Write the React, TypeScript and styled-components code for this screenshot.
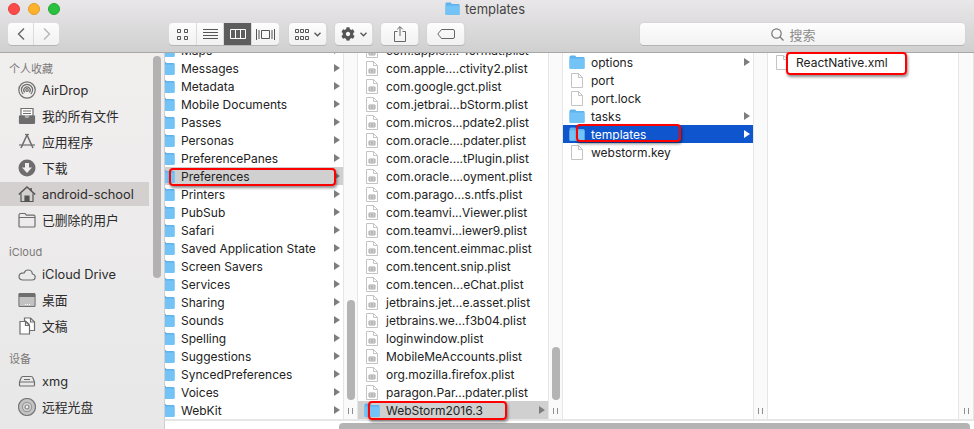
import styled, { createGlobalStyle } from 'styled-components'
import { FaCog } from 'react-icons/fa'

const GlobalStyle = createGlobalStyle`
  html, body {
    margin: 0;
    padding: 0;
    background: #fff;
  }
  #root {
    width: 974px;
    height: 429px;
  }
`

const Window = styled.div`
  position: relative;
  display: flex;
  flex-direction: column;
  width: 974px;
  height: 429px;
  overflow: hidden;
  font-family: Inter, "Noto Sans CJK SC", sans-serif;
  font-size: 12px;
  color: #222;
`

const Toolbar = styled.div`
  flex: 0 0 53px;
  box-sizing: border-box;
  border-bottom: 1px solid #a8a8a8;
  background: linear-gradient(#e9e7e9, #d0d0d0);
`

const TitleRow = styled.div`
  display: grid;
  grid-template-columns: 1fr auto 1fr;
  align-items: center;
  height: 18px;
  padding: 0 0 5px 8px;
`

const Lights = styled.div`
  display: flex;
  gap: 8px;
`

const Light = styled.span<{ $color: string; $edge: string }>`
  box-sizing: border-box;
  width: 12px;
  height: 12px;
  border-radius: 50%;
  background: ${p => p.$color};
  border: 1px solid ${p => p.$edge};
`

const Title = styled.div`
  display: flex;
  align-items: center;
  gap: 5px;
  margin-right: 12px;
  font-size: 13px;
  color: #444;
`

const Controls = styled.div`
  display: flex;
  align-items: flex-start;
  height: 22px;
  padding: 0 9px 0 8px;
`

const ToolGroup = styled.div<{ $gap?: number }>`
  display: flex;
  height: 22px;
  margin-left: ${p => p.$gap ?? 0}px;
`

const ToolButton = styled.div<{ $width: number; $active?: boolean; $gap?: number }>`
  display: flex;
  align-items: center;
  justify-content: center;
  gap: 5px;
  box-sizing: border-box;
  width: ${p => p.$width}px;
  height: 22px;
  margin-left: ${p => p.$gap ?? 0}px;
  background: ${p => (p.$active ? '#5d5d5d' : 'linear-gradient(#fdfdfd, #f1f1f1)')};
  color: ${p => (p.$active ? '#fff' : '#555')};
  border-right: 1px solid #dadada;
  border-radius: 4px;
  box-shadow: 0 1px 0 #b4b4b4, 0 0 0 0.5px #cfcfcf;
`

const SegmentButton = styled(ToolButton)`
  border-radius: 0;
  box-shadow: 0 1px 0 #b4b4b4;
  &:first-child { border-radius: 4px 0 0 4px; }
  &:last-child { border-radius: 0 4px 4px 0; border-right: 0; }
`

const SearchField = styled.div`
  display: flex;
  align-items: center;
  justify-content: center;
  gap: 5px;
  box-sizing: border-box;
  height: 22px;
  width: 325px;
  margin-left: auto;
  padding-right: 18px;
  background: linear-gradient(#fdfdfd, #f2f2f2);
  border-radius: 4px;
  box-shadow: 0 1px 0 #b4b4b4, 0 0 0 0.5px #cfcfcf;
  font-size: 13px;
  color: #8c8c8c;
`

const Body = styled.div`
  flex: 1;
  display: flex;
  min-height: 0;
`

const Sidebar = styled.nav`
  position: relative;
  flex: 0 0 165px;
  box-sizing: border-box;
  padding-top: 4px;
  border-right: 1px solid #cfcfcf;
  background: linear-gradient(#f1eeee, #e8e8e8);
  overflow: hidden;
`

const SideThumb = styled.div`
  position: absolute;
  left: 153px;
  top: 3px;
  width: 8px;
  height: 222px;
  border-radius: 4px;
  background: #b3b1b1;
`

const SideHeader = styled.div<{ $gap?: number; $lift?: number }>`
  display: flex;
  align-items: center;
  box-sizing: border-box;
  height: 19px;
  margin-top: ${p => p.$gap ?? 0}px;
  padding: 2px 0 ${p => p.$lift ?? 0}px 9px;
  font-size: 11px;
  color: #7b7878;
`

const SideItem = styled.div<{ $active?: boolean }>`
  display: flex;
  align-items: center;
  gap: 6px;
  width: 149px;
  height: 24px;
  margin: 2px 0;
  padding-left: 18px;
  box-sizing: border-box;
  font-size: 12.8px;
  color: #2b2b2b;
  background: ${p => (p.$active ? '#d5d0d0' : 'transparent')};
`

// the CJK face sits a pixel low next to the Latin one
const SideLabel = styled.span<{ $cjk?: boolean }>`
  padding-bottom: ${p => (p.$cjk ? 2 : 0)}px;
`

const SideIcon = styled.svg`
  flex: 0 0 18px;
  width: 18px;
  height: 18px;
  fill: none;
  stroke: #6e6e6e;
  stroke-width: 1.2;
`

const Browser = styled.div`
  flex: 1;
  display: flex;
  flex-direction: column;
  min-width: 0;
`

const Columns = styled.div`
  flex: 0 0 366px;
  display: flex;
  overflow: hidden;
`

const Column = styled.div<{ $width: number }>`
  flex: 0 0 ${p => p.$width}px;
  overflow: hidden;
`

// scrolled columns start part way through a row, and the first one is also scrolled sideways
const List = styled.div<{ $top?: number; $left?: number }>`
  margin-top: ${p => p.$top ?? 0}px;
  margin-left: ${p => p.$left ?? 0}px;
`

const Row = styled.div<{ $state?: 'grey' | 'blue' }>`
  display: flex;
  align-items: center;
  gap: 6px;
  height: 18px;
  padding: 0 3px 0 6px;
  white-space: nowrap;
  background: ${p => (p.$state === 'blue' ? '#0f55ce' : p.$state === 'grey' ? '#d0d0d0' : 'transparent')};
  color: ${p => (p.$state === 'blue' ? '#fff' : '#222')};
`

const RowLabel = styled.span`
  flex: 1;
`

const Arrow = styled.span<{ $light?: boolean }>`
  width: 0;
  height: 0;
  border-style: solid;
  border-width: 4.5px 0 4.5px 6px;
  border-color: transparent transparent transparent ${p => (p.$light ? '#fff' : '#7d7d7d')};
`

const IconSlot = styled.span`
  flex: 0 0 16px;
  display: flex;
  justify-content: center;
`

const Strip = styled.div<{ $width?: number }>`
  flex: 0 0 ${p => p.$width ?? 15}px;
  box-sizing: border-box;
  display: flex;
  flex-direction: column;
  align-items: center;
  justify-content: flex-end;
  padding-bottom: 5px;
  background: #fafafa;
  border-left: 1px solid #e6e6e6;
  border-right: 1px solid #e6e6e6;
`

const StripThumb = styled.div<{ $height: number }>`
  width: 8px;
  height: ${p => p.$height}px;
  margin-bottom: 8px;
  border-radius: 4px;
  background: #b4b4b4;
`

const Grip = styled.div`
  width: 5px;
  height: 6px;
  border-left: 1px solid #8f8f8f;
  border-right: 1px solid #8f8f8f;
  box-sizing: border-box;
`

const HScroll = styled.div`
  flex: 1;
  box-sizing: border-box;
  border-top: 2px solid #e6e6e6;
  padding: 2px 4px 0 174px;
  overflow: hidden;
`

const HThumb = styled.div`
  height: 10px;
  border-radius: 4px;
  background: #b4b4b4;
`

const Annotation = styled.div<{ $x: number; $y: number; $w: number; $h: number }>`
  position: absolute;
  left: ${p => p.$x}px;
  top: ${p => p.$y}px;
  width: ${p => p.$w}px;
  height: ${p => p.$h}px;
  box-sizing: border-box;
  border: 2px solid #f00;
  border-radius: 4px;
  box-shadow: 1px 2px 3px rgba(0, 0, 0, 0.45);
`

const Folder = ({ width = 16 }: { width?: number }) => (
  <svg width={width} height={(width * 14) / 16} viewBox="0 0 16 14">
    <path d="M0.5 2 Q0.5 0.5 2 0.5 H6 L7.5 2 H14.5 Q15.5 2 15.5 3 V13 Q15.5 13.7 14.7 13.7 H1.3 Q0.5 13.7 0.5 13 Z" fill="#5fb2ec" />
    <path d="M0.5 3.6 H15.5 V13 Q15.5 13.7 14.7 13.7 H1.3 Q0.5 13.7 0.5 13 Z" fill="#73c3f6" />
  </svg>
)

const Doc = ({ table }: { table?: boolean }) => (
  <svg width="12" height="15" viewBox="0 0 12 15" fill="#fff" stroke="#c4c4c4" strokeWidth="1">
    <path d="M0.5 0.5 H7.5 L11.5 4.5 V14.5 H0.5 Z" />
    <path d="M7.5 0.5 V4.5 H11.5" fill="none" />
    {table && <path d="M3 8 H9 V12 H3 Z M3 10 H9 M6 8 V12" fill="#eee" stroke="#a8a8a8" />}
  </svg>
)

const sideIcons: Record<string, React.ReactNode> = {
  airdrop: (
    <>
      <circle cx="9" cy="9" r="8.2" />
      <path d="M5.2 13 A5.6 5.6 0 1 1 12.8 13" />
      <path d="M6.7 11.4 A3.2 3.2 0 1 1 11.3 11.4" />
      <circle cx="9" cy="9" r="1.3" />
    </>
  ),
  files: (
    <>
      <path d="M3 1.5 H15 V9 H3 Z" fill="#fff" />
      <path d="M5 4 H13 M5 6.5 H13" />
      <path d="M1.5 9 H6 L7 11 H11 L12 9 H16.5 V15.5 Q16.5 16.5 15.5 16.5 H2.5 Q1.5 16.5 1.5 15.5 Z" fill="#6e6e6e" />
    </>
  ),
  apps: (
    <>
      <path d="M9 2 L15 15 M9 2 L3 15" strokeWidth="1.6" />
      <path d="M1 12 H17" />
      <path d="M7 1.5 L11 1.5" />
    </>
  ),
  download: (
    <>
      <circle cx="9" cy="9" r="8.5" fill="#6e6e6e" stroke="none" />
      <path d="M7 4 H11 V8.5 H14 L9 14 L4 8.5 H7 Z" fill="#f1eeee" stroke="none" />
    </>
  ),
  home: (
    <>
      <path d="M0.8 9.5 L9 2 L17.2 9.5" strokeWidth="1.6" stroke="#555" />
      <path d="M13 3 V6" strokeWidth="1.6" stroke="#555" />
      <path d="M3 8.5 V16.5 H15 V8.5" stroke="#555" />
      <path d="M7 16.5 V11 H11 V16.5" fill="#555" stroke="#555" />
    </>
  ),
  folder: <path d="M1 4 Q1 2.5 2.5 2.5 H7 L8.5 4.2 H15.5 Q17 4.2 17 5.5 V15 Q17 16 16 16 H2 Q1 16 1 15 Z M1 6.5 H17" />,
  cloud: <path d="M5 15 H14 Q17.2 15 17.2 12 Q17.2 9.4 14.4 9 Q14 5 10.2 5 Q7.2 5 6.2 7.8 Q1 7.8 1 11.6 Q1 15 5 15 Z" />,
  desktop: (
    <>
      <rect x="1" y="2.5" width="16" height="13" rx="1" />
      <path d="M1.5 5.5 V3 H16.5 V5.5 Z" fill="#6e6e6e" />
      <path d="M2 6 H16 V15 H2 Z" fill="#c2c2c2" stroke="none" />
      <path d="M7 13.5 H8 M9 13.5 H10 M11 13.5 H12" stroke="#fff" />
    </>
  ),
  docs: (
    <>
      <path d="M6.5 1 H12.5 L16.5 5 V13.5 H11 V7 L7.5 4 H6.5 Z" fill="#fff" />
      <path d="M2 4.5 H7.5 L11.5 8.5 V17 H2 Z" fill="#fff" />
      <path d="M7.5 4.5 V8.5 H11.5 M12.5 1 V5 H16.5" />
    </>
  ),
  disk: (
    <>
      <path d="M3 6 Q3.5 4.5 5 4.5 H13 Q14.5 4.5 15 6 L16.5 10 V13 Q16.5 14 15.5 14 H2.5 Q1.5 14 1.5 13 V10 Z" />
      <path d="M1.8 10 H16.2 M6 7.5 H12" />
    </>
  ),
  cd: (
    <>
      <circle cx="9" cy="9" r="8.5" fill="#c4c4c4" stroke="#777" />
      <circle cx="9" cy="9" r="4.6" fill="#d5d5d5" stroke="#999" />
      <circle cx="9" cy="9" r="2" fill="#eee" stroke="#888" />
    </>
  ),
}

const SideEntry = ({ icon, label, active, cjk }: { icon: string; label: string; active?: boolean; cjk?: boolean }) => (
  <SideItem $active={active}>
    <SideIcon viewBox="0 0 18 18">{sideIcons[icon]}</SideIcon>
    <SideLabel $cjk={cjk}>{label}</SideLabel>
  </SideItem>
)

const libraryFolders = [
  'Maps', 'Messages', 'Metadata', 'Mobile Documents', 'Passes', 'Personas', 'PreferencePanes',
  'Preferences', 'Printers', 'PubSub', 'Safari', 'Saved Application State', 'Screen Savers',
  'Services', 'Sharing', 'Sounds', 'Spelling', 'Suggestions', 'SyncedPreferences', 'Voices', 'WebKit',
]

const plists = [
  'com.apple....-format.plist', 'com.apple....ctivity2.plist', 'com.google.gct.plist',
  'com.jetbrai...bStorm.plist', 'com.micros...pdate2.plist', 'com.oracle....pdater.plist',
  'com.oracle....tPlugin.plist', 'com.oracle....oyment.plist', 'com.parago...s.ntfs.plist',
  'com.teamvi...Viewer.plist', 'com.teamvi...iewer9.plist', 'com.tencent.eimmac.plist',
  'com.tencent.snip.plist', 'com.tencen...eChat.plist', 'jetbrains.jet...e.asset.plist',
  'jetbrains.we...f3b04.plist', 'loginwindow.plist', 'MobileMeAccounts.plist',
  'org.mozilla.firefox.plist', 'paragon.Par...pdater.plist',
]

const marks = [
  { x: 169, y: 168, w: 167, h: 18 },
  { x: 368, y: 401, w: 139, h: 19 },
  { x: 576, y: 124, w: 105, h: 18 },
  { x: 786, y: 52, w: 121, h: 23 },
]

export default function App() {
  return (
    <Window>
      <GlobalStyle />
      <Toolbar>
        <TitleRow>
          <Lights>
            <Light $color="#fc4a4a" $edge="#e2403f" />
            <Light $color="#fdb12c" $edge="#e09e23" />
            <Light $color="#2ac13f" $edge="#21a732" />
          </Lights>
          <Title>
            <Folder width={15} />
            templates
          </Title>
        </TitleRow>
        <Controls>
          <ToolGroup>
            <SegmentButton $width={26}>
              <svg width="10" height="14" viewBox="0 0 10 14" fill="none" stroke="#666" strokeWidth="1.4"><path d="M8 1.5 L2.5 7 L8 12.5" /></svg>
            </SegmentButton>
            <SegmentButton $width={25}>
              <svg width="10" height="14" viewBox="0 0 10 14" fill="none" stroke="#b5b5b5" strokeWidth="1.4"><path d="M2 1.5 L7.5 7 L2 12.5" /></svg>
            </SegmentButton>
          </ToolGroup>
          <ToolGroup $gap={110}>
            <SegmentButton $width={28}>
              <svg width="11" height="11" viewBox="0 0 11 11" fill="none" stroke="#555"><path d="M0.5 0.5 H3.5 V3.5 H0.5 Z M7.5 0.5 H10.5 V3.5 H7.5 Z M0.5 7.5 H3.5 V10.5 H0.5 Z M7.5 7.5 H10.5 V10.5 H7.5 Z" /></svg>
            </SegmentButton>
            <SegmentButton $width={27}>
              <svg width="15" height="10" viewBox="0 0 15 10" stroke="#555"><path d="M0 0.5 H15 M0 3.5 H15 M0 6.5 H15 M0 9.5 H15" /></svg>
            </SegmentButton>
            <SegmentButton $width={28} $active>
              <svg width="16" height="10" viewBox="0 0 16 10" fill="none" stroke="#fff"><path d="M0.5 0.5 H15.5 V9.5 H0.5 Z M5.5 0.5 V9.5 M10.5 0.5 V9.5" /></svg>
            </SegmentButton>
            <SegmentButton $width={27}>
              <svg width="19" height="11" viewBox="0 0 19 11" fill="none" stroke="#555"><path d="M5.5 1.5 H13.5 V9.5 H5.5 Z M0.5 0 V11 M3 1 V10 M16 1 V10 M18.5 0 V11" /></svg>
            </SegmentButton>
          </ToolGroup>
          <ToolButton $width={38} $gap={10}>
            <svg width="14" height="11" viewBox="0 0 14 11" fill="none" stroke="#555"><path d="M0.5 0.5 H3.5 V3.5 H0.5 Z M5.5 0.5 H8.5 V3.5 H5.5 Z M10.5 0.5 H13.5 V3.5 H10.5 Z M0.5 7.5 H3.5 V10.5 H0.5 Z M5.5 7.5 H8.5 V10.5 H5.5 Z M10.5 7.5 H13.5 V10.5 H10.5 Z" /></svg>
            <svg width="7" height="5" viewBox="0 0 7 5" fill="none" stroke="#555" strokeWidth="1.3"><path d="M0.5 0.8 L3.5 3.8 L6.5 0.8" /></svg>
          </ToolButton>
          <ToolButton $width={38} $gap={8}>
            <FaCog size={14} color="#555" />
            <svg width="7" height="5" viewBox="0 0 7 5" fill="none" stroke="#555" strokeWidth="1.3"><path d="M0.5 0.8 L3.5 3.8 L6.5 0.8" /></svg>
          </ToolButton>
          <ToolButton $width={38} $gap={8}>
            <svg width="12" height="16" viewBox="0 0 12 16" fill="none" stroke="#666"><path d="M3.5 5.5 H0.5 V15.5 H11.5 V5.5 H8.5 M6 10 V0.8 M3.2 3.4 L6 0.6 L8.8 3.4" /></svg>
          </ToolButton>
          <ToolButton $width={38} $gap={8}>
            <svg width="18" height="10" viewBox="0 0 18 10" fill="none" stroke="#666"><path d="M0.8 5 L4.5 0.5 H16 Q17.5 0.5 17.5 2 V8 Q17.5 9.5 16 9.5 H4.5 Z" /></svg>
          </ToolButton>
          <SearchField>
            <svg width="13" height="13" viewBox="0 0 13 13" fill="none" stroke="#777" strokeWidth="1.2"><circle cx="5.5" cy="5.5" r="4.7" /><path d="M9 9 L12.5 12.5" /></svg>
            搜索
          </SearchField>
        </Controls>
      </Toolbar>
      <Body>
        <Sidebar>
          <SideThumb />
          <SideHeader>个人收藏</SideHeader>
          <SideEntry icon="airdrop" label="AirDrop" />
          <SideEntry icon="files" label="我的所有文件" cjk />
          <SideEntry icon="apps" label="应用程序" cjk />
          <SideEntry icon="download" label="下载" cjk />
          <SideEntry icon="home" label="android-school" active />
          <SideEntry icon="folder" label="已删除的用户" cjk />
          <SideHeader $gap={9}>iCloud</SideHeader>
          <SideEntry icon="cloud" label="iCloud Drive" />
          <SideEntry icon="desktop" label="桌面" cjk />
          <SideEntry icon="docs" label="文稿" cjk />
          <SideHeader $gap={10} $lift={2}>设备</SideHeader>
          <SideEntry icon="disk" label="xmg" />
          <SideEntry icon="cd" label="远程光盘" cjk />
        </Sidebar>
        <Browser>
          <Columns>
            <Column $width={178}>
              <List $top={-12} $left={-12}>
                {libraryFolders.map(name => (
                  <Row key={name} $state={name === 'Preferences' ? 'grey' : undefined}>
                    <IconSlot><Folder /></IconSlot>
                    <RowLabel>{name}</RowLabel>
                    <Arrow />
                  </Row>
                ))}
              </List>
            </Column>
            <Strip>
              <StripThumb $height={100} />
              <Grip />
            </Strip>
            <Column $width={190}>
              <List $top={-12}>
                {plists.map(name => (
                  <Row key={name}>
                    <IconSlot><Doc table /></IconSlot>
                    <RowLabel>{name}</RowLabel>
                  </Row>
                ))}
                <Row $state="grey">
                  <IconSlot><Folder /></IconSlot>
                  <RowLabel>WebStorm2016.3</RowLabel>
                  <Arrow />
                </Row>
              </List>
            </Column>
            <Strip>
              <StripThumb $height={53} />
              <Grip />
            </Strip>
            <Column $width={190}>
              <List>
                <Row>
                  <IconSlot><Folder /></IconSlot>
                  <RowLabel>options</RowLabel>
                  <Arrow />
                </Row>
                <Row>
                  <IconSlot><Doc /></IconSlot>
                  <RowLabel>port</RowLabel>
                </Row>
                <Row>
                  <IconSlot><Doc /></IconSlot>
                  <RowLabel>port.lock</RowLabel>
                </Row>
                <Row>
                  <IconSlot><Folder /></IconSlot>
                  <RowLabel>tasks</RowLabel>
                  <Arrow />
                </Row>
                <Row $state="blue">
                  <IconSlot><Folder /></IconSlot>
                  <RowLabel>templates</RowLabel>
                  <Arrow $light />
                </Row>
                <Row>
                  <IconSlot><Doc /></IconSlot>
                  <RowLabel>webstorm.key</RowLabel>
                </Row>
              </List>
            </Column>
            <Strip>
              <Grip />
            </Strip>
            <Column $width={190}>
              <List>
                <Row>
                  <IconSlot><Doc /></IconSlot>
                  <RowLabel>ReactNative.xml</RowLabel>
                </Row>
              </List>
            </Column>
            <Strip $width={16}>
              <Grip />
            </Strip>
          </Columns>
          <HScroll>
            <HThumb />
          </HScroll>
        </Browser>
      </Body>
      {marks.map(m => (
        <Annotation key={m.x} $x={m.x} $y={m.y} $w={m.w} $h={m.h} />
      ))}
    </Window>
  )
}
